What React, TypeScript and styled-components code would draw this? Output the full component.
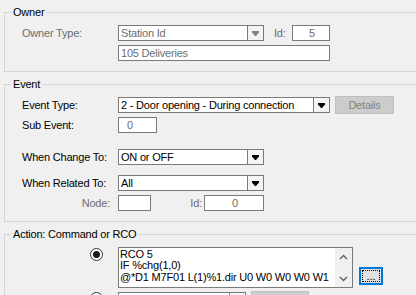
import styled, { createGlobalStyle } from 'styled-components'

const GlobalStyle = createGlobalStyle`
  html, body {
    margin: 0;
    padding: 0;
    background: #f0f0f0;
    overflow: hidden;
  }
  body {
    font-family: "Liberation Sans", Arial, sans-serif;
    font-size: 11px;
    letter-spacing: -0.2px;
    color: #000;
  }
`

const Window = styled.div`
  width: 416px;
  height: 295px;
  overflow: hidden;
  padding-left: 4px;
  box-sizing: border-box;
`

const Group = styled.fieldset`
  margin: 6px 0 0 0;
  padding: 0;
  width: 460px;
  min-width: 0;
  border: 1px solid #d5d5d5;
`

const Legend = styled.legend`
  margin-left: 6px;
  padding: 0 2px;
  height: 13px;
  line-height: 13px;
`

const GroupBody = styled.div`
  padding: 6px 0 10px 17px;
`

const Row = styled.div<{ $top?: number; $auto?: boolean }>`
  display: flex;
  align-items: ${({ $auto }) => ($auto ? 'flex-start' : 'center')};
  height: ${({ $auto }) => ($auto ? 'auto' : '16px')};
  margin-top: ${({ $top }) => $top ?? 0}px;
`

const Label = styled.span<{ $disabled?: boolean; $right?: boolean; $width?: number; $indent?: number }>`
  flex: none;
  box-sizing: border-box;
  width: ${({ $width }) => $width ?? 96}px;
  color: ${({ $disabled }) => ($disabled ? '#6d6d6d' : '#000')};
  text-align: ${({ $right }) => ($right ? 'right' : 'left')};
  padding-left: ${({ $indent }) => $indent ?? 0}px;
  padding-right: ${({ $right }) => ($right ? 8 : 0)}px;
  white-space: nowrap;
`

const IdLabel = styled(Label)`
  padding-right: 2px;
`

const Field = styled.div<{ $width: number; $disabled?: boolean; $center?: boolean; $pad?: number }>`
  flex: none;
  box-sizing: border-box;
  width: ${({ $width }) => $width}px;
  height: 16px;
  border: 1px solid #7a7a7a;
  background: #fff;
  color: ${({ $disabled }) => ($disabled ? '#6d6d6d' : '#000')};
  line-height: 14px;
  padding: 0 0 0 ${({ $pad }) => $pad ?? 2}px;
  text-align: ${({ $center }) => ($center ? 'center' : 'left')};
  white-space: nowrap;
  overflow: hidden;
`

const Combo = styled.div<{ $width: number; $disabled?: boolean; $top?: number }>`
  flex: none;
  display: flex;
  box-sizing: border-box;
  width: ${({ $width }) => $width}px;
  height: 16px;
  margin-top: ${({ $top }) => $top ?? 0}px;
  border: 1px solid #7a7a7a;
  background: #fff;
  color: ${({ $disabled }) => ($disabled ? '#6d6d6d' : '#000')};
`

const ComboText = styled.span`
  flex: 1;
  padding-left: 2px;
  line-height: 14px;
  white-space: nowrap;
  overflow: hidden;
`

const ComboButton = styled.span`
  flex: none;
  width: 15px;
  border-left: 1px solid #7a7a7a;
  background: #f4f4f4;
  display: flex;
  align-items: center;
  justify-content: center;
`

const GrayButton = styled.div<{ $width: number; $flush?: boolean }>`
  flex: none;
  box-sizing: border-box;
  width: ${({ $width }) => $width}px;
  height: 18px;
  margin: ${({ $flush }) => ($flush ? '0 0 0 5px' : '-1px 0 -1px 5px')};
  border: 1px solid #bfbfbf;
  background: #cccccc;
  color: #838383;
  line-height: 16px;
  text-align: center;
`

const RadioCell = styled.div`
  flex: none;
  width: 96px;
  padding-left: 68px;
  box-sizing: border-box;
`

const Radio = styled.span<{ $checked?: boolean }>`
  display: flex;
  align-items: center;
  justify-content: center;
  width: 13px;
  height: 13px;
  margin-top: 1px;
  box-sizing: border-box;
  border: 1px solid #333;
  border-radius: 50%;
  background: #fff;

  &::after {
    content: '';
    display: ${({ $checked }) => ($checked ? 'block' : 'none')};
    width: 7px;
    height: 7px;
    border-radius: 50%;
    background: #1a1a1a;
  }
`

const CommandBox = styled.div`
  flex: none;
  display: flex;
  box-sizing: border-box;
  width: 235px;
  height: 41px;
  border: 1px solid #7a7a7a;
  background: #fff;
`

const CommandText = styled.div`
  flex: 1;
  padding: 1px 0 0 1px;
  line-height: 11.4px;
  white-space: pre;
  overflow: hidden;
`

const ScrollBar = styled.div`
  flex: none;
  width: 17px;
  background: #f0f0f0;
  display: flex;
  flex-direction: column;
  justify-content: space-between;
`

const ScrollArrow = styled.span`
  height: 17px;
  display: flex;
  align-items: center;
  justify-content: center;
`

const MoreButton = styled.div`
  flex: none;
  align-self: flex-end;
  box-sizing: border-box;
  width: 24px;
  height: 18px;
  margin: 0 0 3px 6px;
  border: 2px solid #0078d7;
  background: #e1e1e1;
  padding: 1px;
`

const FocusRect = styled.div`
  box-sizing: border-box;
  height: 100%;
  border: 1px dotted #000;
  line-height: 10px;
  text-align: center;
  letter-spacing: 0;
`

const DropArrow = ({ disabled }: { disabled?: boolean }) => (
  <svg width="7" height="5" viewBox="0 0 7 5">
    <polygon points="0,0 7,0 7,1.5 4,5 3,5 0,1.5" fill={disabled ? '#838383' : '#000'} />
  </svg>
)

const Chevron = ({ up }: { up?: boolean }) => (
  <svg width="9" height="6" viewBox="0 0 9 6">
    <polyline
      points={up ? '1,5 4.5,1.5 8,5' : '1,1 4.5,4.5 8,1'}
      fill="none"
      stroke="#606060"
      strokeWidth="1.4"
    />
  </svg>
)

const ComboBox = ({ width, text, disabled, top }: { width: number; text: string; disabled?: boolean; top?: number }) => (
  <Combo $width={width} $disabled={disabled} $top={top}>
    <ComboText>{text}</ComboText>
    <ComboButton>
      <DropArrow disabled={disabled} />
    </ComboButton>
  </Combo>
)

export default function App() {
  return (
    <Window>
      <GlobalStyle />
      <Group>
        <Legend>Owner</Legend>
        <GroupBody>
          <Row>
            <Label $disabled>Owner Type:</Label>
            <ComboBox width={146} text="Station Id" disabled />
            <Label $disabled $width={28} $indent={10}>Id:</Label>
            <Field $width={38} $disabled $center>5</Field>
          </Row>
          <Row $top={4}>
            <Label />
            <Field $width={212} $disabled>105 Deliveries</Field>
          </Row>
        </GroupBody>
      </Group>

      <Group>
        <Legend>Event</Legend>
        <GroupBody>
          <Row>
            <Label>Event Type:</Label>
            <ComboBox width={212} text="2 - Door opening - During connection" />
            <GrayButton $width={59}>Details</GrayButton>
          </Row>
          <Row $top={4}>
            <Label>Sub Event:</Label>
            <Field $width={39} $disabled $pad={8}>0</Field>
          </Row>
          <Row $top={16}>
            <Label>When Change To:</Label>
            <ComboBox width={146} text="ON or OFF" />
          </Row>
          <Row $top={10}>
            <Label>When Related To:</Label>
            <ComboBox width={146} text="All" />
          </Row>
          <Row $top={4}>
            <Label $disabled $right>Node:</Label>
            <Field $width={33} />
            <IdLabel $disabled $right $width={53}>Id:</IdLabel>
            <Field $width={60} $disabled $center>0</Field>
          </Row>
        </GroupBody>
      </Group>

      <Group>
        <Legend>Action: Command or RCO</Legend>
        <GroupBody>
          <Row $auto>
            <RadioCell>
              <Radio $checked />
            </RadioCell>
            <CommandBox>
              <CommandText>
                {'RCO 5\nIF %chg(1,0)\n@*D1 M7F01 L(1)%1.dir U0 W0 W0 W0 W1'}
              </CommandText>
              <ScrollBar>
                <ScrollArrow>
                  <Chevron up />
                </ScrollArrow>
                <ScrollArrow>
                  <Chevron />
                </ScrollArrow>
              </ScrollBar>
            </CommandBox>
            <MoreButton>
              <FocusRect>...</FocusRect>
            </MoreButton>
          </Row>
          <Row $auto $top={3}>
            <RadioCell>
              <Radio />
            </RadioCell>
            <ComboBox width={128} text="" top={1} />
            <GrayButton $width={58} $flush>RCO</GrayButton>
          </Row>
        </GroupBody>
      </Group>
    </Window>
  )
}
